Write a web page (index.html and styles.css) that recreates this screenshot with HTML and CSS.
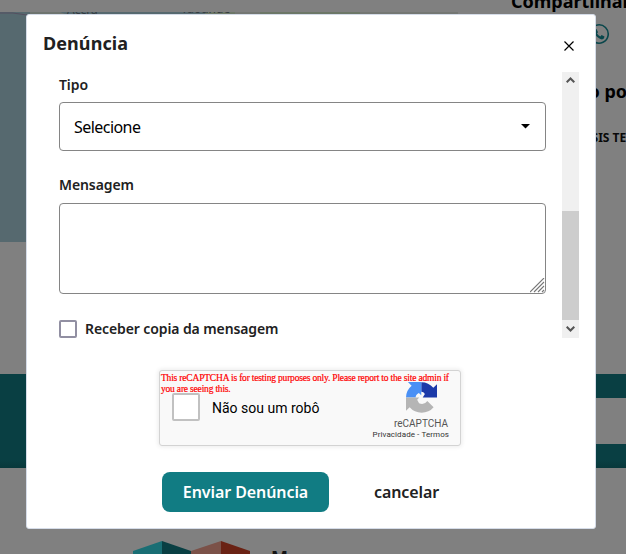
FILE: index.html
```html
<!DOCTYPE html>
<html lang="pt-BR">
<head>
<meta charset="utf-8">
<title>Denúncia</title>
<link rel="stylesheet" href="styles.css">
</head>
<body>
<div class="page">
  <div class="top">
    <svg class="map" width="458" height="230" viewBox="0 0 458 230">
      <rect width="458" height="230" fill="#56696f"/>
      <path d="M30 0H60L70 4H30Z" fill="#6e746f"/>
      <path d="M205 0H397V4H205Z" fill="#6c7767"/>
      <path d="M235 0h25v4h-25zM360 0h98v4h-98z" fill="#747773"/>
      <path d="M0 1Q12 0 27 3" stroke="#544f60" fill="none"/>
      <text x="67" y="2" class="place">Accra</text>
      <text x="181" y="0.500" class="place">Yaoundé</text>
    </svg>
    <div class="aside">
      <div class="share">Compartilhar</div>
      <svg class="whats" width="22" height="22" viewBox="0 0 22 22" fill="none" stroke="#09464b" stroke-width="1.600">
        <path d="M1.500 20.500 3 15.500A9.200 9.200 0 1 1 6.500 19Z"/>
        <path d="M7 6.300 8.500 6 10 9.200 9 10.500Q10.300 12.600 12.300 13.500L13.600 12.100 16.500 13.600Q16.500 16 14 16.400C10 16 6 11 6 8Z" fill="#09464b" stroke="none"/>
      </svg>
      <div class="posted">Publicado por</div>
      <div class="agent">OASIS TECH</div>
    </div>
  </div>
  <div class="band"><div class="field"></div></div>
  <div class="footer">
    <svg width="120" height="40" viewBox="0 0 120 40">
      <path d="M0 10 29 0V40H0Z" fill="#196e74"/><path d="M29 0 58 10V40H29Z" fill="#093f43"/>
      <path d="M58 10 88 0V40H58Z" fill="#7b5148"/><path d="M88 0 117 10V40H88Z" fill="#6a2214"/>
    </svg>
    <b class="brand">Mapas</b>
  </div>
</div>
<div class="modal">
  <div class="head">
    <h1>Denúncia</h1>
    <svg class="close" width="10" height="10" viewBox="0 0 10 10"><path d="M.5.5 9.500 9.500M9.500.5.5 9.500" stroke="#000" stroke-width="1.200"/></svg>
  </div>
  <div class="scroll">
    <div class="form">
      <div class="label">Tipo</div>
      <div class="select"><span class="value">Selecione</span><svg width="9" height="5" viewBox="0 0 9 5"><path d="M0 0H9L4.500 4.500Z" fill="#000"/></svg></div>
      <div class="label second">Mensagem</div>
      <div class="area"><svg width="15" height="15" viewBox="0 0 15 15" stroke="#777" stroke-width="1.100"><path d="M0 14 14 0M4 14 14 4M8 14 14 8M12 14 14 12"/></svg></div>
      <div class="check"><span class="box"></span><span>Receber copia da mensagem</span></div>
    </div>
    <div class="bar">
      <div class="arrow up"><svg width="9" height="6" viewBox="0 0 9 6"><path d="M.7 5.300 4.500 1.500 8.300 5.300" fill="none" stroke="#555" stroke-width="2"/></svg></div>
      <div class="thumb"></div>
      <div class="arrow"><svg width="9" height="6" viewBox="0 0 9 6"><path d="M.7.7 4.500 4.500 8.300.7" fill="none" stroke="#555" stroke-width="2"/></svg></div>
    </div>
  </div>
  <div class="captcha">
    <div class="tick"></div>
    <div class="robot">Não sou um robô</div>
    <div class="rc">
      <svg width="31" height="31" viewBox="0 0 64 64">
        <path d="M64 32V4.500L56.400 12.100A32 32 0 0 0 31.500.5V20.300Q36 20 39 25L34.500 32Z" fill="#1c3aa9"/>
        <path d="M31.500 0H4L11.600 7.600A32 32 0 0 0 0 32H20Q19.500 26 26.500 22.500L31.500 27.500Z" fill="#4a90f5"/>
        <path d="M0 32V59.500L7.600 52A32 32 0 0 0 57 52L44 39Q38 48 27 44L23 36.500 27.500 32Z" fill="#b5b5b5"/>
      </svg>
      <div class="rcname">reCAPTCHA</div>
      <div class="rclinks">Privacidade&nbsp;-&nbsp;Termos</div>
    </div>
    <div class="warn"><span>This reCAPTCHA is for testing purposes only. Please report to the site admin if</span><br><span>you are seeing this.</span></div>
  </div>
  <div class="actions"><div class="send"><span>Enviar Denúncia</span></div><div class="cancel">cancelar</div></div>
</div>
</body>
</html>
```
FILE: styles.css
```css
*{box-sizing:border-box}
body{margin:0;width:626px;height:554px;overflow:hidden;background:#808080;font-family:"Noto Sans","Open Sans",sans-serif;color:#212121}
svg{display:block;flex:none}
.page{height:554px;overflow:hidden;display:flex;flex-direction:column}
.top{height:374px;display:flex;flex:none}
.map{margin-top:12px;overflow:hidden}
.place{font:12px "Noto Sans",sans-serif;fill:#333b40}
.aside{margin-left:53px;width:115px;overflow:hidden;white-space:nowrap;color:#090909}
.share{font-size:18px;font-weight:700;line-height:24px;margin-top:-11px;color:#000}
.whats{margin:10px 0 0 77px}
.posted{font-size:18px;font-weight:700;line-height:24px;margin:34px 0 0 1px;color:#000}
.agent{font-size:12px;font-weight:700;line-height:16px;margin:27px 0 0 63px}
.band{height:94px;flex:none;background:linear-gradient(#093f43 0 86px,#08383b);display:flex;align-items:center;justify-content:flex-end}
.field{width:430px;height:46px;background:#808080}
.footer{display:flex;flex:none;margin:73px 0 0 133px}
.brand{font-size:18px;line-height:24px;margin:4px 0 0 18px;color:#141414}
.modal{position:absolute;left:26px;top:14px;width:570px;height:515px;background:#fff;border:1px solid #d5dce8;border-radius:3px;display:flex;flex-direction:column}
.head{display:flex;justify-content:space-between;height:57px;padding:16px 20px 0 16px;flex:none}
h1{font-size:18px;line-height:25px;font-weight:700;margin:0;letter-spacing:.08px}
.close{margin:10px 1px 0 0}
.scroll{display:flex;justify-content:space-between;height:266px;padding:0 16px 0 32px;flex:none}
.form{width:487px;font-size:14px;font-weight:600;line-height:20px;letter-spacing:-.1px}
.label{margin:3px 0 7px}
.label.second{margin:24px 0 8px}
.select{height:49px;border:1px solid #858585;border-radius:4px;display:flex;align-items:center;justify-content:space-between;padding:0 15px 0 14px;font-size:16px;font-weight:400;color:#000}
.value{letter-spacing:-.55px}
.area{height:91px;border:1px solid #858585;border-radius:4px;display:flex;align-items:flex-end;justify-content:flex-end}
.check{display:flex;align-items:center;gap:8px;margin-top:25px}
.box{width:18px;height:18px;border:2px solid #918fa2;border-radius:2px}
.bar{width:17px;background:#f0f0f0;display:flex;flex-direction:column}
.arrow{height:18px;display:flex;align-items:center;justify-content:center}
.arrow.up{height:15px}
.thumb{height:109px;background:#cdcdcd;margin-top:auto}
.captcha{position:relative;width:302px;height:76px;margin:32px 0 0 132px;flex:none;background:#f9f9f9;border:1px solid #d3d3d3;border-radius:3px;box-shadow:0 0 4px 1px rgba(0,0,0,.08);display:flex;font-family:Roboto,sans-serif}
.tick{width:28px;height:28px;border:2px solid #c1c1c1;border-radius:2px;background:#fff;margin:22px 0 0 12px}
.robot{font-size:14px;line-height:17px;color:#000;margin:29px 0 0 12px;white-space:nowrap}
.rc{margin:11px 11px 0 auto;display:flex;flex-direction:column;align-items:flex-end;color:#555}
.rc svg{margin-right:12px}
.rcname{font-size:10px;line-height:10px;margin:6px 1px 0 0}
.rclinks{font-size:8px;line-height:10px;margin-top:1px;color:#333;white-space:nowrap;letter-spacing:.08px}
.warn{position:absolute;left:1px;top:2px;font:9.500px/10.500px "Liberation Serif",serif;letter-spacing:-.19px;color:red;white-space:nowrap;-webkit-text-stroke:.2px red}
.actions{display:flex;margin:26px 0 0 135px;font-size:16px;font-weight:600;line-height:22px;letter-spacing:-.08px}
.send{width:167px;height:40px;background:#117c83;border-radius:8px;color:#fff;display:flex;align-items:center;justify-content:center}
.cancel{margin:9px 0 0 45px}
```
